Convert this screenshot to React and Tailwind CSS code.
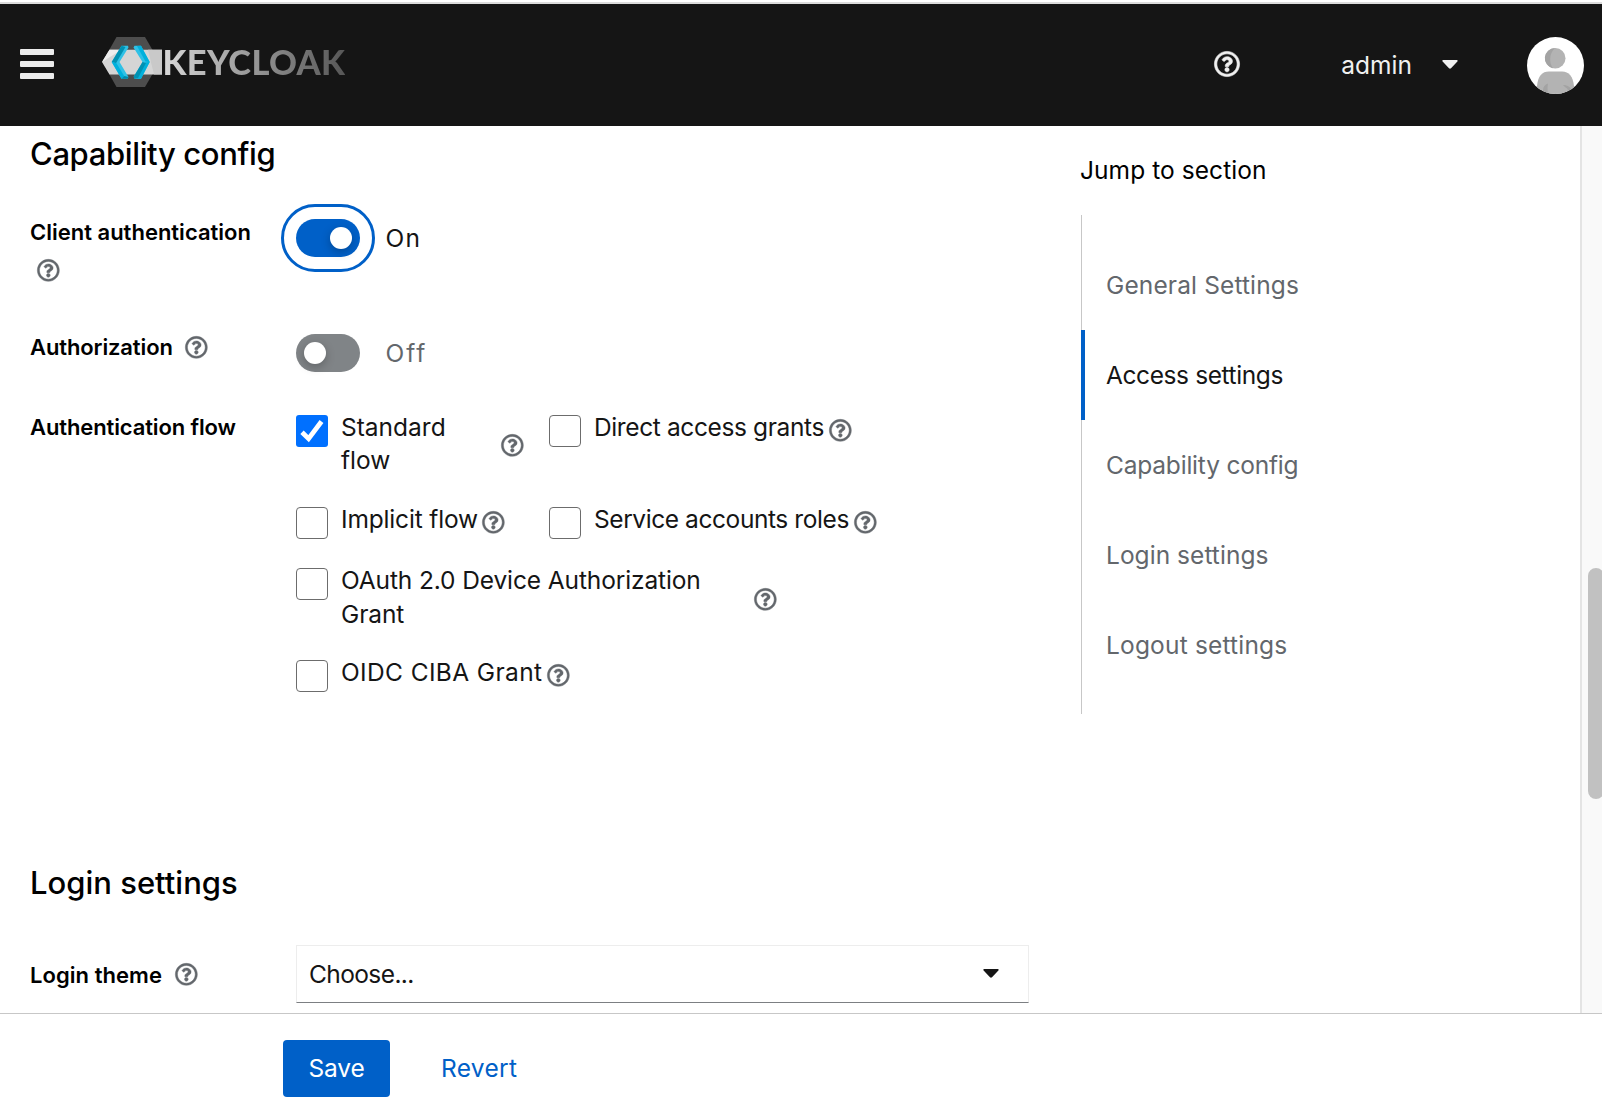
import React from "react";
import { FaRegQuestionCircle } from "react-icons/fa";

function Help({ className = "" }) {
  return (
    <FaRegQuestionCircle
      className={"size-[22.7px] shrink-0 overflow-visible stroke-[#63676c] stroke-[10px] text-[#63676c] " + className}
    />
  );
}

function Caret({ className = "" }) {
  return (
    <svg viewBox="0 0 16 9" className={"h-[9px] w-4 " + className} fill="currentColor">
      <path d="M1.2 0h13.6c.9 0 1.2.9.6 1.5L9 8.3c-.6.6-1.4.6-2 0L.6 1.5C0 .9.3 0 1.2 0z" />
    </svg>
  );
}

function Logo() {
  return (
    <div className="mb-[7px] ml-[47.5px] flex h-[50px] items-center">
      <svg viewBox="0 0 61 50" className="h-[50px] w-[61px]">
        <path d="M14.500 0H43l14.500 25L43 50H14.500L.5 25z" fill="#4d4d4d" />
        <path d="M7.500 12.700h52.500v24.800H7.500L0 25z" fill="#d5d5d5" />
        <path d="M7.500 12.700h12L0 25z" fill="#ededed" />
        <path d="M46 12.700h14v24.800h-8z" fill="#c9c9c9" />
        <path d="M19.500 8.700h6.500l.5 1.800L17.500 25l9 15-1 1.700h-6L9.700 25z" fill="#2fc1e6" />
        <path d="M19.500 8.700L9.700 25l4.300 1.200L23.500 10z" fill="#0091b2" />
        <path d="M9.700 25l4.600 1 8.200 13.500-3 2.200z" fill="#00b0dc" />
        <path d="M26.500 40l-1 1.700h-6l3-2.600z" fill="#008aaa" />
        <path d="M32.500 8.700h6.500L47.700 25 39 41.700h-6.500l-.8-2L40.500 25l-9-14.500z" fill="#2fc1e6" />
        <path d="M39 8.700L47.700 25l-4.300-.5L35 9z" fill="#00b0dc" />
        <path d="M47.700 25L39 41.700h-4l8.300-16.200z" fill="#00b0dc" />
        <path d="M40.500 25l3.500 1-8 15-3.500.7-.8-2z" fill="#0091b2" />
      </svg>
      <span className="bg-gradient-to-r from-[#d8d8d8] via-[#969696] to-[#575757] bg-clip-text font-['Lato',sans-serif] text-[34.5px] leading-[50px] font-black tracking-[0.3px] text-transparent">
        KEYCLOAK
      </span>
    </div>
  );
}

function Avatar() {
  return (
    <svg viewBox="0 0 57 57" className="size-[57px]">
      <defs>
        <clipPath id="avatar-clip">
          <circle cx="28.5" cy="28.5" r="28.5" />
        </clipPath>
      </defs>
      <g clipPath="url(#avatar-clip)">
        <path d="M0 0h57v57H0z" fill="#fff" />
        <circle cx="28.300" cy="21.300" r="10.200" fill="#b3b3b3" />
        <path d="M28 11.100a10.200 10.200 0 0 0-2 20.200c-4-5-4-15 2-20.200z" fill="#a3a3a3" />
        <path d="M10 57V49c1-10 5-14.500 12-14.500h13c7 0 11 5 12 14.500v8z" fill="#b3b3b3" />
        <path d="M16 57v-4c0-3 2-5.500 5-6.500-.7 3-.5 7 0 10.500zM42 57l-1.500-5c-1.500-1.500-3-2-4.500-4 4 0 7 1.500 8.500 4.500V57z" fill="#a3a3a3" />
      </g>
    </svg>
  );
}

function Toggle({ on, focused, label, labelClass }) {
  return (
    <div className="-ml-[15px] flex items-center self-start">
      <div
        className={
          "flex h-[68px] w-[94px] items-center justify-center rounded-full border-[3px] " +
          (focused ? "border-[#0060c8]" : "border-transparent")
        }
      >
        <div
          className={
            "flex h-[38px] w-16 items-center rounded-full px-2 " +
            (on ? "justify-end bg-[#0060c8]" : "justify-start bg-[#808487]")
          }
        >
          <span className="size-[22px] rounded-full bg-white shadow-[0_3px_10px_rgba(0,0,0,0.25)]" />
        </div>
      </div>
      <span className={"ml-[10.5px] " + labelClass}>{label}</span>
    </div>
  );
}

function Checkbox({ checked }) {
  return checked ? (
    <span className="mt-1 flex size-8 shrink-0 items-center justify-center rounded-[3px] bg-[#0070ff]">
      <svg viewBox="0 0 32 32" className="size-8" fill="none" stroke="#fff" strokeWidth="4.8">
        <path d="M6 17.200l6.600 6.400L25.500 6.500" />
      </svg>
    </span>
  ) : (
    <span className="mt-1 size-8 shrink-0 rounded-[4px] border-[1.5px] border-[#6c6c6c] bg-white" />
  );
}

function Check({ checked, className, textClass = "", helpClass, children }) {
  return (
    <div className={"flex items-start " + className}>
      <Checkbox checked={checked} />
      <span className={"ml-[13px] leading-[33.4px] " + textClass}>{children}</span>
      <Help className={helpClass} />
    </div>
  );
}

function Label({ className = "", children }) {
  return (
    <span className={"text-[22px] leading-[34px] font-semibold text-black " + className}>{children}</span>
  );
}

const links = [
  { text: "General Settings", cls: "tracking-[0.13px] text-[#63676c]" },
  { text: "Access settings", cls: "tracking-[-0.4px] text-[#151515]", active: true },
  { text: "Capability config", cls: "tracking-[-0.2px] text-[#63676c]" },
  { text: "Login settings", cls: "tracking-[0.04px] text-[#63676c]" },
  { text: "Logout settings", cls: "tracking-[0.18px] text-[#63676c]" },
];

export default function App() {
  return (
    <div className="flex h-[1102px] w-[1602px] flex-col overflow-hidden bg-white font-['Inter',sans-serif] text-[24.5px] leading-[34px] text-[#151515]">
      <div className="h-1 shrink-0 border-b-2 border-[#dcdcdc]" />
      <header className="flex h-[122px] shrink-0 items-center bg-[#151515] pl-5 text-[#f0f0f0]">
        <div className="mb-[2px] flex w-[34px] flex-col gap-1.5">
          <span className="h-1.5 rounded-[1px] bg-[#ececec]" />
          <span className="h-1.5 rounded-[1px] bg-[#ececec]" />
          <span className="h-1.5 rounded-[1px] bg-[#ececec]" />
        </div>
        <Logo />
        <div className="ml-auto flex items-center pr-[18px]">
          <FaRegQuestionCircle className="mb-[3px] size-[26px] overflow-visible stroke-current stroke-[12px]" />
          <span className="ml-[101.5px] tracking-[0px]">admin</span>
          <Caret className="mb-px ml-[30px]" />
          <span className="ml-[69px]">
            <Avatar />
          </span>
        </div>
      </header>

      <main className="flex h-[887px] shrink-0 overflow-hidden">
        <section className="w-[1051px] pt-2 pl-[30px]">
          <h1 className="text-[31px] leading-10 font-medium tracking-[-0.36px] text-black">Capability config</h1>
          <div className="mt-[30px] grid grid-cols-[266px_1fr]">
            <div className="flex h-[115px] flex-col pt-[11px]">
              <Label className="tracking-[0px]">Client authentication</Label>
              <Help className="mt-[10px] ml-[7px]" />
            </div>
            <Toggle on focused label="On" labelClass="tracking-[1.27px]" />
            <div className="flex h-20 items-start pt-[11px]">
              <Label className="tracking-[-0.12px]">Authorization</Label>
              <Help className="mt-[6px] ml-[12.5px]" />
            </div>
            <Toggle label="Off" labelClass="tracking-[1.9px] text-[#63676c]" />
            <Label className="mt-[11px] tracking-[-0.12px]">Authentication flow</Label>
            <div className="mt-3 grid grid-cols-[253px_1fr]">
              <Check checked className="h-[92px]" textClass="w-[160px] tracking-[0px]" helpClass="mt-[23px]">
                Standard
                <br />
                flow
              </Check>
              <Check className="h-[92px]" textClass="tracking-[-0.38px]" helpClass="mt-2 ml-[4.500px]">
                Direct access grants
              </Check>
              <Check className="h-[61px]" textClass="tracking-[-0.16px]" helpClass="mt-2 ml-[4px]">
                Implicit flow
              </Check>
              <Check className="h-[61px]" textClass="tracking-[-0.42px]" helpClass="mt-2 ml-[5.500px]">
                Service accounts roles
              </Check>
              <Check
                className="col-span-2 h-[92px]"
                textClass="w-[413px] tracking-[-0.12px]"
                helpClass="mt-[24px]"
              >
                OAuth 2.0 Device Authorization
                <span className="block pt-px">Grant</span>
              </Check>
              <Check className="col-span-2" textClass="tracking-[0.37px]" helpClass="mt-2 ml-[5px]">
                OIDC CIBA Grant
              </Check>
            </div>
          </div>

          <h2 className="mt-[171px] text-[31px] leading-10 font-medium text-black">Login settings</h2>
          <div className="mt-[42px] grid grid-cols-[266px_1fr]">
            <div className="flex items-center pt-[2px]">
              <Label className="tracking-[0.05px]">Login theme</Label>
              <Help className="mb-px ml-[12.5px]" />
            </div>
            <div className="flex h-[58px] w-[733px] items-center justify-between border border-[#ededed] border-b-[#7c7f82] pr-[29px] pl-3">
              <span className="tracking-[-0.6px]">Choose...</span>
              <Caret className="mb-px" />
            </div>
          </div>
        </section>

        <nav className="w-[529px] pt-[27px] pl-[30px]">
          <p className="-ml-px tracking-[0.07px] text-black">Jump to section</p>
          <ul className="mt-[28px] h-[499px] border-l border-[#c7c7c7] py-[25px]">
            {links.map((l) => (
              <li
                key={l.text}
                className={
                  "-ml-px flex h-[89.9px] items-center border-l-4 pl-[21px] " +
                  (l.active ? "border-[#0060c8] " : "border-transparent ") +
                  l.cls
                }
              >
                {l.text}
              </li>
            ))}
          </ul>
        </nav>

        <div className="w-[22px] border-l-2 border-[#e4e4e4] bg-[#f9f9f9] pt-[442px] pl-[6px]">
          <div className="h-[231px] w-4 rounded-full bg-[#c1c1c1]" />
        </div>
      </main>

      <footer className="flex h-[89px] shrink-0 items-start border-t border-[#c7c7c7] pt-[26px] pl-[283px]">
        <button className="h-[57px] w-[107px] rounded-[4px] bg-[#0060c8] pb-[2px] tracking-[-0.14px] text-white">
          Save
        </button>
        <button className="ml-[51px] h-[57px] pb-[2px] tracking-[0.32px] text-[#0060c8]">Revert</button>
      </footer>
    </div>
  );
}
